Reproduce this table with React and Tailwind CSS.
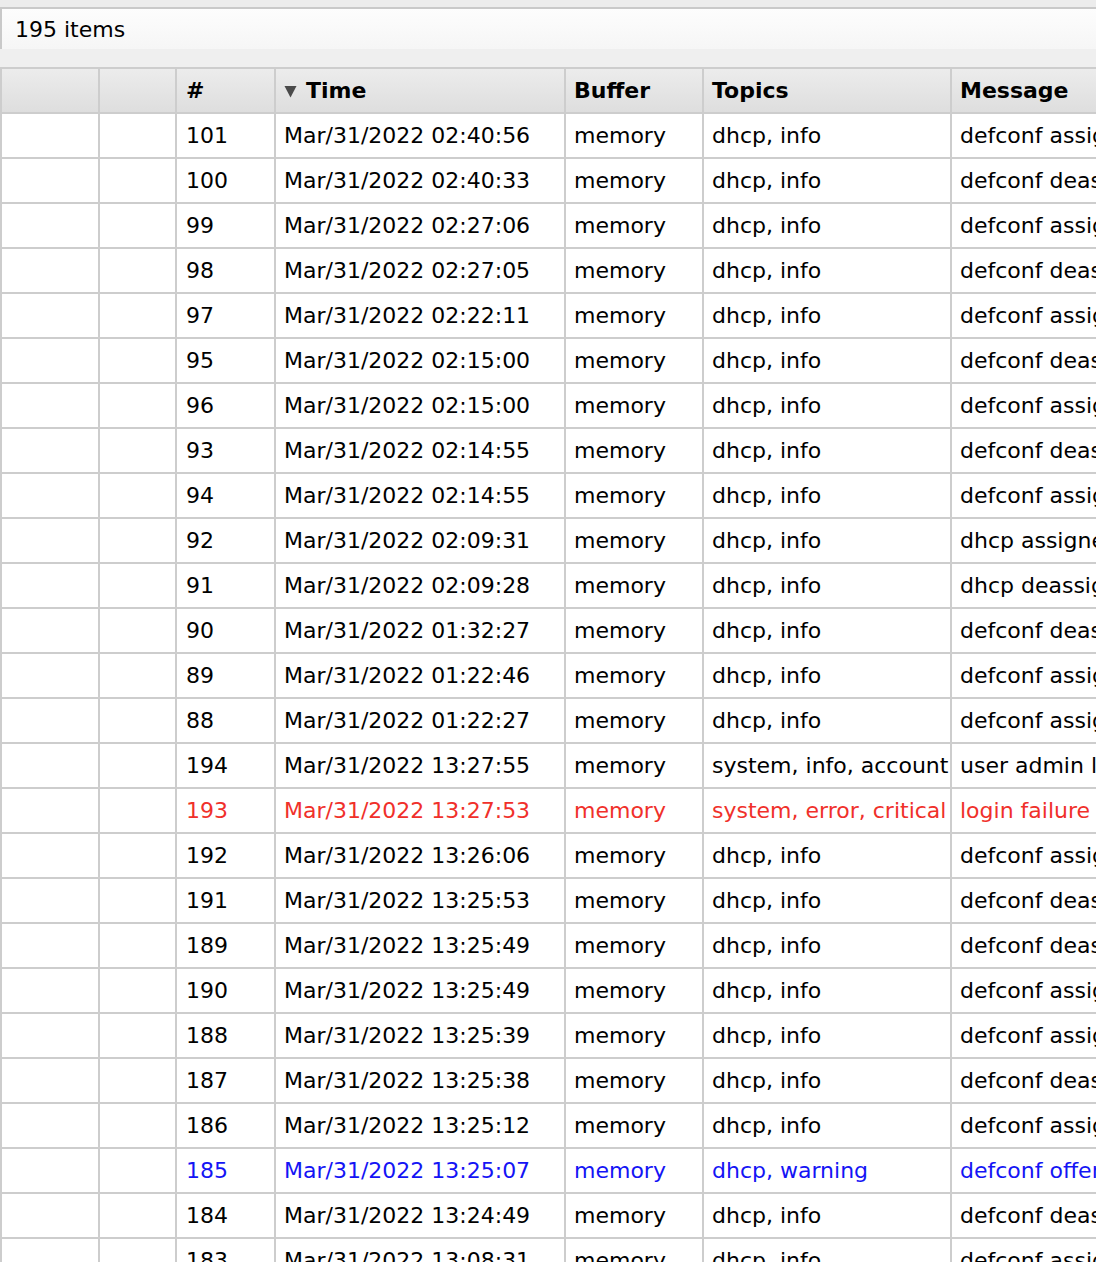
import React from "react";

const rows = [
  ["101", "02:40:56", "dhcp, info", "defconf assigned 192.168.88.254 to 00:11:22:33:44:55", ""],
  ["100", "02:40:33", "dhcp, info", "defconf deassigned 192.168.88.254 from 00:11:22:33:44:55", ""],
  ["99", "02:27:06", "dhcp, info", "defconf assigned 192.168.88.253 to 00:11:22:33:44:56", ""],
  ["98", "02:27:05", "dhcp, info", "defconf deassigned 192.168.88.253 from 00:11:22:33:44:56", ""],
  ["97", "02:22:11", "dhcp, info", "defconf assigned 192.168.88.252 to 00:11:22:33:44:57", ""],
  ["95", "02:15:00", "dhcp, info", "defconf deassigned 192.168.88.251 from 00:11:22:33:44:58", ""],
  ["96", "02:15:00", "dhcp, info", "defconf assigned 192.168.88.251 to 00:11:22:33:44:58", ""],
  ["93", "02:14:55", "dhcp, info", "defconf deassigned 192.168.88.250 from 00:11:22:33:44:59", ""],
  ["94", "02:14:55", "dhcp, info", "defconf assigned 192.168.88.250 to 00:11:22:33:44:59", ""],
  ["92", "02:09:31", "dhcp, info", "dhcp assigned 10.0.0.254 to 00:11:22:33:44:60", ""],
  ["91", "02:09:28", "dhcp, info", "dhcp deassigned 10.0.0.254 from 00:11:22:33:44:60", ""],
  ["90", "01:32:27", "dhcp, info", "defconf deassigned 192.168.88.249 from 00:11:22:33:44:61", ""],
  ["89", "01:22:46", "dhcp, info", "defconf assigned 192.168.88.249 to 00:11:22:33:44:61", ""],
  ["88", "01:22:27", "dhcp, info", "defconf assigned 192.168.88.248 to 00:11:22:33:44:62", ""],
  ["194", "13:27:55", "system, info, account", "user admin logged in from 192.168.88.10 via winbox", ""],
  ["193", "13:27:53", "system, error, critical", "login failure for user admin from 192.168.88.10 via winbox", "red"],
  ["192", "13:26:06", "dhcp, info", "defconf assigned 192.168.88.247 to 00:11:22:33:44:63", ""],
  ["191", "13:25:53", "dhcp, info", "defconf deassigned 192.168.88.247 from 00:11:22:33:44:63", ""],
  ["189", "13:25:49", "dhcp, info", "defconf deassigned 192.168.88.246 from 00:11:22:33:44:64", ""],
  ["190", "13:25:49", "dhcp, info", "defconf assigned 192.168.88.246 to 00:11:22:33:44:64", ""],
  ["188", "13:25:39", "dhcp, info", "defconf assigned 192.168.88.245 to 00:11:22:33:44:65", ""],
  ["187", "13:25:38", "dhcp, info", "defconf deassigned 192.168.88.245 from 00:11:22:33:44:65", ""],
  ["186", "13:25:12", "dhcp, info", "defconf assigned 192.168.88.244 to 00:11:22:33:44:66", ""],
  ["185", "13:25:07", "dhcp, warning", "defconf offering lease 192.168.88.244 for 00:11:22:33:44:66", "blue"],
  ["184", "13:24:49", "dhcp, info", "defconf deassigned 192.168.88.243 from 00:11:22:33:44:67", ""],
  ["183", "13:08:31", "dhcp, info", "defconf assigned 192.168.88.243 to 00:11:22:33:44:67", ""],
];

const cell =
  "shrink-0 h-full border-r-2 border-[#cdcdcd] pl-[8px] flex items-center whitespace-nowrap overflow-hidden";

function Row({ r }) {
  const [num, time, topics, msg, tone] = r;
  const color =
    tone === "red" ? "text-[#f0302a]" : tone === "blue" ? "text-[#1414f5]" : "text-black";
  return (
    <div className={`flex h-[45px] border-b-2 border-[#cdcdcd] bg-white ${color}`}>
      <div className={`${cell} w-[98px]`} />
      <div className={`${cell} w-[77px]`} />
      <div className={`${cell} w-[99px] pl-[9px]`}>{num}</div>
      <div className={`${cell} w-[290px]`}>Mar/31/2022 {time}</div>
      <div className={`${cell} w-[138px]`}>memory</div>
      <div className={`${cell} w-[248px] pl-[7px]`}>{topics}</div>
      <div className={`${cell} w-[500px] border-r-0`}>{msg}</div>
    </div>
  );
}

export default function App() {
  return (
    <div
      className="w-[1096px] h-[1262px] overflow-hidden bg-[#ededed] text-[22px] text-black"
      style={{ fontFamily: '"DejaVu Sans", Verdana, sans-serif' }}
    >
      <div className="h-[7px] bg-[#ececec]" />
      <div className="h-[42px] border-t-2 border-l-2 border-[#c9c9c9] bg-gradient-to-b from-[#fdfdfd] to-[#f6f6f6] flex items-center pl-[13px]">
        195 items
      </div>
      <div className="h-[18px] bg-[#efefef]" />
      <div className="border-l-2 border-[#cdcdcd] w-[1400px]">
        <div className="flex h-[47px] border-t-2 border-b-2 border-[#cdcdcd] bg-gradient-to-b from-[#ececec] to-[#dedede] font-bold">
          <div className={`${cell} w-[98px]`} />
          <div className={`${cell} w-[77px]`} />
          <div className={`${cell} w-[99px] pl-[9px]`}>#</div>
          <div className={`${cell} w-[290px] gap-[9px]`}>
            <svg width="13" height="13" viewBox="0 0 13 13" className="mt-[1px]">
              <path d="M0.5 1 H12.5 L6.5 12.5 Z" fill="#4a4a4a" />
            </svg>
            <span>Time</span>
          </div>
          <div className={`${cell} w-[138px]`}>Buffer</div>
          <div className={`${cell} w-[248px] pl-[7px]`}>Topics</div>
          <div className={`${cell} w-[500px] border-r-0`}>Message</div>
        </div>
        {rows.map((r, i) => (
          <Row key={i} r={r} />
        ))}
      </div>
    </div>
  );
}
